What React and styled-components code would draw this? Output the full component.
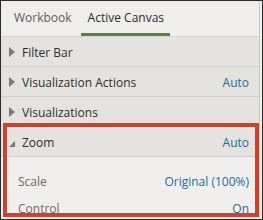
import React from 'react';
import styled, { createGlobalStyle } from 'styled-components';

const GlobalStyle = createGlobalStyle`
  html, body {
    margin: 0;
    padding: 0;
    background: #ffffff;
  }
  * {
    box-sizing: border-box;
  }
`;

const Frame = styled.div`
  width: 263px;
  height: 220px;
  border: 1px solid #2b2b2b;
  background: #f1f0ee;
  overflow: hidden;
  font-family: "Open Sans", "Noto Sans", sans-serif;
  font-size: 12px;
  color: #2e2d2b;
`;

const Panel = styled.div`
  width: 259px;
  height: 100%;
  border-right: 1px solid #c9c8c4;
  background: #efeeec;
`;

const Tabs = styled.div`
  display: flex;
  height: 36px;
  padding-left: 6px;
  border-bottom: 1px solid #d6d5d1;
`;

const Tab = styled.div`
  display: flex;
  align-items: center;
  padding: 0 6px 0 7px;
  margin-right: 3px;
  color: ${(p) => (p.$active ? '#2c2b29' : '#5e5d5a')};
  border-bottom: 3px solid ${(p) => (p.$active ? '#5d7d4b' : 'transparent')};
  padding-top: 1px;
`;

const Section = styled.div`
  position: relative;
`;

const Header = styled.div`
  display: flex;
  align-items: center;
  height: 30px;
  padding: 1px 10px 0 8px;
  background: #e4e3e0;
  border-bottom: 1px solid #d0cfcb;
`;

const Arrow = styled.span`
  width: 0;
  height: 0;
  margin-right: 7px;
  border-top: 5px solid transparent;
  border-bottom: 5px solid transparent;
  border-left: 6px solid #7b7a77;
`;

const OpenArrow = styled.span`
  width: 0;
  height: 0;
  margin-right: 7px;
  margin-top: 3px;
  border-left: 6px solid transparent;
  border-bottom: 6px solid #7b7a77;
`;

const Title = styled.span`
  flex: 1;
`;

const Value = styled.span`
  color: #1d6c99;
`;

const Body = styled.div`
  padding: 11px 10px 0 17px;
  background: #f0efed;
`;

const Row = styled.div`
  display: flex;
  justify-content: space-between;
  align-items: center;
  height: 27px;
`;

const Label = styled.span`
  color: #6b6a67;
`;

const Highlight = styled.div`
  position: absolute;
  left: 2px;
  right: 0;
  top: -4px;
  height: 94px;
  border: 4px solid #c9432e;
  pointer-events: none;
`;

export default function App() {
  return (
    <>
      <GlobalStyle />
      <Frame>
        <Panel>
          <Tabs>
            <Tab>Workbook</Tab>
            <Tab $active>Active Canvas</Tab>
          </Tabs>
          <Header>
            <Arrow />
            <Title>Filter Bar</Title>
          </Header>
          <Header>
            <Arrow />
            <Title>Visualization Actions</Title>
            <Value>Auto</Value>
          </Header>
          <Header>
            <Arrow />
            <Title>Visualizations</Title>
          </Header>
          <Section>
            <Header>
              <OpenArrow />
              <Title>Zoom</Title>
              <Value>Auto</Value>
            </Header>
            <Body>
              <Row>
                <Label>Scale</Label>
                <Value>Original (100%)</Value>
              </Row>
              <Row>
                <Label>Control</Label>
                <Value>On</Value>
              </Row>
            </Body>
            <Highlight />
          </Section>
        </Panel>
      </Frame>
    </>
  );
}
